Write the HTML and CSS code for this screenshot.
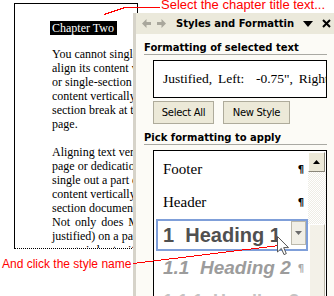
FILE: index.html
```html
<!DOCTYPE html>
<html lang="en">
<head>
  <meta charset="UTF-8" />
  <title>Styles and Formatting</title>
  <link rel="stylesheet" href="styles.css">
</head>
<body>

  <div class="screen">
    <div class="doc">
      <div class="page">
        <p class="chapter"><span class="selected">Chapter Two</span></p>
        <div class="para">
          <div class="ln">You cannot single out a part of a</div>
          <div class="ln">align its content vertically. If you</div>
          <div class="ln">or single-section document, you</div>
          <div class="ln">content vertically, you need to</div>
          <div class="ln">section break at the top of the</div>
          <div class="ln">page.</div>
        </div>
        <div class="para">
          <div class="ln">Aligning text vertically is useful</div>
          <div class="ln">page or dedication page. Since</div>
          <div class="ln">single out a part of a page and</div>
          <div class="ln">content vertically, it works best</div>
          <div class="ln">section documents or a section</div>
          <div class="ln wide">Not only does Microsoft Word</div>
          <div class="ln">justified) on a page, but it also</div>
          <div class="ln">a page is best with</div>
        </div>
      </div>
    </div>

    <div class="pane">
      <div class="pane-bar">
        <svg class="nav" width="9" height="9" viewBox="0 0 9 9"><path d="M0 4.5L4.5 0V3H9V6H4.5V9Z" fill="#a9a79c"/></svg>
        <svg class="nav fwd" width="9" height="9" viewBox="0 0 9 9"><path d="M9 4.5L4.5 0V3H0V6H4.5V9Z" fill="#a9a79c"/></svg>
        <span class="pane-title">Styles and Formatting</span>
        <svg class="menu" width="10" height="6" viewBox="0 0 10 6"><path d="M0 0H10L5 6Z" fill="#000"/></svg>
        <svg class="close" width="9" height="9" viewBox="0 0 9 9"><path d="M1 1L8 8M8 1L1 8" stroke="#000" stroke-width="2"/></svg>
      </div>

      <div class="group">
        <div class="group-head">Formatting of selected text</div>
        <div class="group-body">
          <div class="current">Justified, Left:&nbsp; -0.75", Right: 0"</div>
          <div class="buttons">
            <button class="btn btn-select">Select All</button>
            <button class="btn btn-new">New Style</button>
          </div>
        </div>
      </div>

      <div class="group group-pick">
        <div class="group-head">Pick formatting to apply</div>
        <div class="group-body">
          <div class="list">
            <div class="items">
              <div class="item plain">Footer<span class="pilcrow">¶</span></div>
              <div class="item plain">Header<span class="pilcrow">¶</span></div>
              <div class="item h1 active">
                <span class="item-name">1&nbsp; Heading 1</span>
                <span class="item-drop"><svg width="7" height="4" viewBox="0 0 7 4"><path d="M0 0H7L3.5 4Z" fill="#6b6b6b"/></svg></span>
              </div>
              <div class="item h2"><span class="item-name">1.1&nbsp; Heading 2</span><span class="pilcrow">¶</span></div>
              <div class="item h3"><span class="item-name">1.1.1&nbsp; Heading 3</span></div>
            </div>
            <div class="scroll">
              <div class="scroll-up"><svg width="7" height="4" viewBox="0 0 7 4"><path d="M0 4H7L3.5 0Z" fill="#000"/></svg></div>
              <div class="scroll-track"></div>
              <div class="scroll-thumb"></div>
            </div>
          </div>
        </div>
      </div>
    </div>

    <div class="note note-top">Select the chapter title text...</div>
    <div class="note note-bottom">And click the style name</div>

    <svg class="callouts" width="334" height="296" viewBox="0 0 334 296">
      <polyline points="104,14.5 125,7.5 160,7.5" fill="none" stroke="#f00" stroke-width="1"/>
      <line x1="133" y1="263.5" x2="279" y2="245.5" stroke="#f00" stroke-width="1"/>
    </svg>

    <svg class="cursor" width="13" height="20" viewBox="0 0 13 20">
      <path d="M0.5 0.5V16L4.3 12.4L7 18.6L9.3 17.6L6.7 11.6H11.5Z" fill="#fff" stroke="#555" stroke-width="1"/>
    </svg>
  </div>

</body>
</html>
```

FILE: styles.css
```css
body {
  margin: 0;
  background: #fff;
}
.screen {
  position: relative;
  width: 334px;
  height: 296px;
  overflow: hidden;
  display: flex;
  background: #fff;
}

/* document page */
.doc {
  width: 133px;
  flex: none;
}
.page {
  box-sizing: border-box;
  width: 124px;
  height: 246px;
  margin: 3px 0 0 14px;
  padding: 17px 0 0 37px;
  border: 1px solid #000;
  border-bottom-style: dotted;
  overflow: hidden;
  font-family: "Liberation Serif", serif;
  font-size: 12px;
  line-height: 14px;
  color: #000;
}
.chapter {
  margin: 0 0 12px -2px;
}
.selected {
  background: #000;
  color: #fff;
  padding: 0 3px 0 2px;
}
.para {
  margin-bottom: 14px;
}
.ln {
  white-space: nowrap;
}
.ln.wide {
  word-spacing: 2px;
}

/* task pane */
.pane {
  position: relative;
  z-index: 1;
  flex: none;
  width: 198px;
  height: 283px;
  margin-top: 13px;
  border-left: 3px solid #d6d3c9;
  background: #fcfbf6;
  overflow: hidden;
  font-family: "DejaVu Sans", sans-serif;
}
.pane-bar {
  display: flex;
  align-items: center;
  height: 21px;
  padding-left: 6px;
  background: #ebe9db;
}
.nav.fwd {
  margin-left: 6px;
}
.pane-title {
  width: 118px;
  margin-left: 10px;
  overflow: hidden;
  white-space: nowrap;
  font-size: 10px;
  font-weight: bold;
  color: #000;
}
.menu {
  margin-left: 9px;
}
.close {
  margin-left: 9px;
}

.group {
  margin-top: 7px;
  padding: 0 7px 0 8px;
}
.group-pick {
  margin-top: 7px;
}
.group-head {
  height: 13px;
  line-height: 13px;
  font-size: 10px;
  font-weight: bold;
  color: #000;
  white-space: nowrap;
  border-bottom: 1px solid #a9a9a3;
}
.group-body {
  padding-left: 9px;
}
.current {
  box-sizing: border-box;
  height: 38px;
  margin-top: 5px;
  padding-left: 9px;
  border: 1px solid #000;
  background: #fff;
  font-family: "Liberation Serif", serif;
  font-size: 13.5px;
  line-height: 36px;
  word-spacing: 2.5px;
  white-space: nowrap;
  overflow: hidden;
}
.buttons {
  display: flex;
  gap: 9px;
  margin-top: 3px;
}
.btn {
  height: 23px;
  padding: 0;
  border: 1px solid #aeab9b;
  background: #ece9d8;
  font-family: "DejaVu Sans", sans-serif;
  font-size: 10px;
  letter-spacing: -0.3px;
  color: #000;
}
.btn-select {
  width: 61px;
}
.btn-new {
  width: 67px;
}

/* style list */
.list {
  display: flex;
  height: 160px;
  margin-top: 5px;
  border: 1px solid #000;
  background: #fff;
}
.items {
  flex: 1;
  padding-top: 2px;
  overflow: hidden;
}
.item {
  display: flex;
  align-items: center;
  justify-content: space-between;
  height: 33px;
  padding: 0 4px 0 9px;
  white-space: nowrap;
}
.item.plain {
  font-family: "Liberation Serif", serif;
  font-size: 15px;
  color: #000;
}
.pilcrow {
  font-family: "DejaVu Sans", sans-serif;
  font-size: 10px;
  font-weight: bold;
  color: #000;
}
.item-name {
  overflow: hidden;
  font-family: "Liberation Sans", sans-serif;
  font-weight: bold;
}
.item.active {
  box-sizing: border-box;
  height: 32px;
  margin-left: 2px;
  padding: 0 0 0 5px;
  border: 2px solid #7f9fd9;
  align-items: flex-start;
}
.h1 .item-name {
  align-self: center;
  font-size: 20px;
  color: #505050;
}
.item-drop {
  box-sizing: border-box;
  display: flex;
  align-items: center;
  justify-content: center;
  flex: none;
  width: 15px;
  height: 24px;
  border: 1px solid #bcb9ab;
  background: #f1efe6;
}
.h2 {
  height: 34px;
}
.h2 .item-name {
  font-size: 19px;
  font-style: italic;
  color: #9c9c9c;
}
.h2 .pilcrow {
  color: #a8a8a8;
}
.h3 {
  align-items: flex-start;
  padding-top: 6px;
}
.h3 .item-name {
  font-size: 18px;
  line-height: 20px;
  color: #c4c4c4;
}

.scroll {
  display: flex;
  flex-direction: column;
  width: 18px;
  padding-top: 1px;
}
.scroll-up {
  box-sizing: border-box;
  display: flex;
  align-items: center;
  justify-content: center;
  width: 17px;
  height: 20px;
  border: 1px solid;
  border-color: #fff #8a877a #8a877a #fff;
  background: #ece9d8;
}
.scroll-track {
  height: 52px;
  background: repeating-conic-gradient(#eeede5 0 25%, #fff 0 50%) 0 0 / 2px 2px;
}
.scroll-thumb {
  box-sizing: border-box;
  flex: 1;
  width: 16px;
  margin-left: 1px;
  border: 1px solid;
  border-color: #fff #b8b5a6 #b8b5a6 #fff;
  background: #f3f1e8;
}

/* red annotations */
.note {
  position: absolute;
  z-index: 3;
  font-family: "Liberation Sans", Arial, sans-serif;
  color: #f00;
  white-space: nowrap;
}
.note-top {
  left: 161px;
  top: -2px;
  font-size: 13px;
  line-height: 13px;
}
.note-bottom {
  left: 2px;
  top: 258px;
  font-size: 12px;
  line-height: 12px;
}
.callouts {
  position: absolute;
  left: 0;
  top: 0;
  z-index: 3;
  shape-rendering: crispEdges;
}
.cursor {
  position: absolute;
  left: 277px;
  top: 236px;
  z-index: 4;
}
```
